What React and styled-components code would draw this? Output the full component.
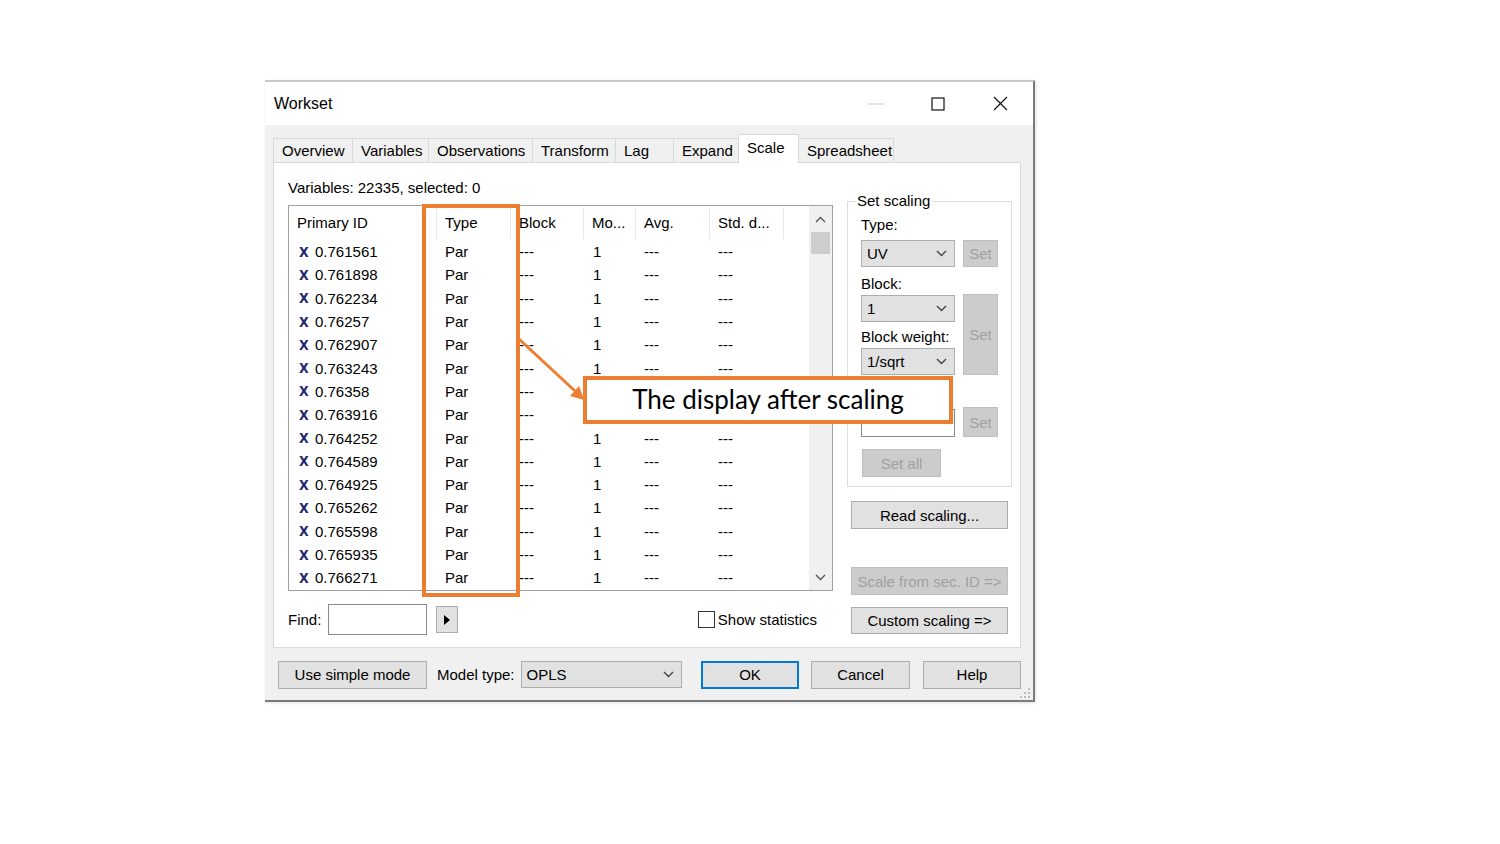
import React from 'react';
import styled, { createGlobalStyle } from 'styled-components';

const GlobalStyle = createGlobalStyle`
  html, body {
    margin: 0;
    padding: 0;
    background: #fff;
  }
  body {
    font-family: "Liberation Sans", Arial, sans-serif;
    color: #000;
  }
`;

const ORANGE = '#ED7D31';

const Page = styled.div`
  position: relative;
  width: 1500px;
  height: 844px;
  box-sizing: border-box;
  padding: 80px 0 0 265px;
  overflow: hidden;
`;

const Window = styled.div`
  position: relative;
  width: 770px;
  box-sizing: border-box;
  background: #f0f0f0;
  border-top: 2px solid #c8c8c8;
  border-right: 2px solid #7b7b7b;
  border-bottom: 2px solid #7b7b7b;
  box-shadow: 1px 1px 3px rgba(0, 0, 0, 0.12);
`;

const TitleBar = styled.div`
  height: 43px;
  background: #fff;
  display: flex;
  align-items: center;
  padding-right: 2px;
`;

const Title = styled.div`
  flex: 1;
  padding-left: 9px;
  font-size: 16px;
`;

const WinButton = styled.div`
  width: 62px;
  height: 43px;
  display: flex;
  align-items: center;
  justify-content: center;
`;

const Body = styled.div`
  padding: 9px 12px 11px 8px;
`;

const TabRow = styled.div`
  display: flex;
  align-items: flex-end;
  height: 28px;
`;

const Tab = styled.div`
  position: relative;
  z-index: ${p => (p.$active ? 2 : 1)};
  box-sizing: border-box;
  width: ${p => p.$w}px;
  height: ${p => (p.$active ? 29 : 24)}px;
  margin-left: -1px;
  margin-bottom: ${p => (p.$active ? -1 : 0)}px;
  padding-left: 8px;
  border: 1px solid #d9d9d9;
  border-bottom: none;
  background: ${p => (p.$active ? '#fff' : '#f0f0f0')};
  font-size: 15px;
  line-height: ${p => (p.$active ? 26 : 23)}px;
  white-space: nowrap;

  &:first-child {
    margin-left: 0;
  }
`;

const Panel = styled.div`
  position: relative;
  z-index: 0;
  height: 486px;
  box-sizing: border-box;
  background: #fff;
  border: 1px solid #d9d9d9;
  padding: 16px 7px 12px 14px;
  display: flex;
  gap: 14px;
`;

const LeftCol = styled.div`
  width: 545px;
  display: flex;
  flex-direction: column;
`;

const InfoLabel = styled.div`
  font-size: 15px;
  line-height: 18px;
  height: 18px;
`;

const ListBox = styled.div`
  margin-top: 8px;
  height: 386px;
  box-sizing: border-box;
  border: 1px solid #a0a0a0;
  display: flex;
  overflow: hidden;
`;

const ListMain = styled.div`
  flex: 1;
  display: flex;
  flex-direction: column;
`;

const HeaderRow = styled.div`
  display: flex;
  height: 34px;
  align-items: flex-start;
`;

const HeadCell = styled.div`
  box-sizing: border-box;
  width: ${p => p.$w}px;
  height: 31px;
  line-height: 30px;
  margin-top: 2px;
  padding-left: ${p => p.$pad}px;
  font-size: 15px;
  white-space: nowrap;
  border-right: 1px solid #e8e8e8;
`;

const Row = styled.div`
  display: flex;
  height: 23.3px;
  align-items: center;
`;

const Cell = styled.div`
  box-sizing: border-box;
  width: ${p => p.$w}px;
  padding-left: ${p => p.$pad}px;
  font-size: 15px;
  white-space: nowrap;
  display: flex;
  align-items: center;
`;

const XMark = styled.span`
  font-family: "DejaVu Sans", sans-serif;
  font-weight: bold;
  font-size: 14px;
  color: #23246f;
  width: 16px;
  margin-left: 2px;
  transform: scaleX(0.9);
  transform-origin: left center;
`;

const ScrollBar = styled.div`
  width: 23px;
  background: #f0f0f0;
  display: flex;
  flex-direction: column;
  align-items: center;
`;

const ScrollArrow = styled.div`
  height: 26px;
  width: 100%;
  display: flex;
  align-items: center;
  justify-content: center;
`;

const Thumb = styled.div`
  width: 19px;
  height: 22px;
  background: #cdcdcd;
`;

const ScrollTrack = styled.div`
  flex: 1;
`;

const FindRow = styled.div`
  margin-top: 13px;
  height: 31px;
  display: flex;
  align-items: center;
`;

const FindLabel = styled.div`
  font-size: 15px;
  width: 40px;
`;

const TextBox = styled.div`
  box-sizing: border-box;
  width: ${p => p.$w}px;
  height: ${p => p.$h}px;
  margin-top: ${p => p.$mt || 0}px;
  background: #fff;
  border: 1px solid #8a8a8a;
`;

const SmallButton = styled.div`
  box-sizing: border-box;
  width: 22px;
  height: 27px;
  margin-left: 9px;
  background: #e1e1e1;
  border: 1px solid #adadad;
  display: flex;
  align-items: center;
  justify-content: center;
`;

const CheckWrap = styled.label`
  margin-left: auto;
  margin-right: 16px;
  display: flex;
  align-items: center;
  font-size: 15px;
  gap: 3px;
`;

const CheckBox = styled.span`
  box-sizing: border-box;
  width: 17px;
  height: 17px;
  border: 1px solid #333;
  background: #fff;
`;

const RightCol = styled.div`
  width: 165px;
  padding-top: 13px;
  display: flex;
  flex-direction: column;
`;

const GroupBox = styled.fieldset`
  margin: 0;
  padding: 0 0 9px 13px;
  border: 1px solid #dcdcdc;
  min-width: 0;
`;

const Legend = styled.legend`
  font-size: 15px;
  line-height: 18px;
  padding: 0 2px;
  margin-left: -6px;
`;

const FieldLabel = styled.div`
  font-size: 15px;
  line-height: 18px;
  height: 18px;
  margin-top: ${p => p.$mt}px;
  white-space: nowrap;
`;

const Select = styled.div`
  box-sizing: border-box;
  width: ${p => p.$w}px;
  height: 27px;
  margin-top: ${p => p.$mt || 0}px;
  padding: 0 7px 0 5px;
  background: #e1e1e1;
  border: 1px solid #adadad;
  display: flex;
  align-items: center;
  justify-content: space-between;
  font-size: 15px;
`;

const FieldRow = styled.div`
  display: flex;
  align-items: flex-end;
  gap: 8px;
  margin-top: ${p => p.$mt || 0}px;
`;

const FieldCol = styled.div`
  width: 94px;
  display: flex;
  flex-direction: column;
`;

const Button = styled.div`
  box-sizing: border-box;
  width: ${p => p.$w}px;
  height: ${p => p.$h || 28}px;
  margin-top: ${p => p.$mt || 0}px;
  margin-left: ${p => p.$ml || 0}px;
  flex-shrink: 0;
  display: flex;
  align-items: center;
  justify-content: center;
  font-size: 15px;
  white-space: nowrap;
  color: ${p => (p.$off ? '#a0a0a0' : '#000')};
  background: ${p => (p.$off ? '#cccccc' : '#e1e1e1')};
  border: ${p =>
    p.$primary ? '2px solid #0078d7' : `1px solid ${p.$off ? '#bfbfbf' : '#adadad'}`};
`;

const BottomBar = styled.div`
  margin-top: 12px;
  height: 29px;
  display: flex;
  align-items: center;
`;

const BarLabel = styled.div`
  font-size: 15px;
  margin-left: 10px;
  margin-right: 6px;
  white-space: nowrap;
`;

const Grip = styled.svg`
  position: absolute;
  right: 3px;
  bottom: 2px;
`;

const TypeFrame = styled.div`
  position: absolute;
  left: 422px;
  top: 204px;
  width: 98px;
  height: 393px;
  box-sizing: border-box;
  border: 4px solid ${ORANGE};
  pointer-events: none;
`;

const Callout = styled.div`
  position: absolute;
  left: 583px;
  top: 376px;
  width: 370px;
  height: 48px;
  box-sizing: border-box;
  border: 4px solid ${ORANGE};
  background: #fff;
  display: flex;
  align-items: center;
  justify-content: center;
  font-family: Lato, "Open Sans", sans-serif;
  font-size: 26px;
  color: #000;
  padding-bottom: 2px;
`;

const ArrowSvg = styled.svg`
  position: absolute;
  left: 510px;
  top: 330px;
  pointer-events: none;
`;

const Chevron = ({ dir = 'down', color = '#444' }) => (
  <svg width="11" height="7" viewBox="0 0 11 7">
    <path
      d={dir === 'down' ? 'M1 1 L5.5 5.5 L10 1' : 'M1 6 L5.5 1.5 L10 6'}
      fill="none"
      stroke={color}
      strokeWidth="1.4"
    />
  </svg>
);

const tabs = [
  ['Overview', 80],
  ['Variables', 77],
  ['Observations', 105],
  ['Transform', 84],
  ['Lag', 59],
  ['Expand', 66],
  ['Scale', 61],
  ['Spreadsheet', 96],
];

const columns = [
  { title: 'Primary ID', w: 148, pad: 8 },
  { title: 'Type', w: 74, pad: 8 },
  { title: 'Block', w: 73, pad: 8 },
  { title: 'Mo...', w: 52, pad: 8 },
  { title: 'Avg.', w: 74, pad: 8 },
  { title: 'Std. d...', w: 74, pad: 8 },
];

const ids = [
  '0.761561', '0.761898', '0.762234', '0.76257', '0.762907',
  '0.763243', '0.76358', '0.763916', '0.764252', '0.764589',
  '0.764925', '0.765262', '0.765598', '0.765935', '0.766271',
];

// rows 7 and 8 sit behind the callout, only their left part shows
const hiddenRows = ['0.76358', '0.763916'];

const App = () => {
  return (
    <Page>
      <GlobalStyle />
      <Window>
        <TitleBar>
          <Title>Workset</Title>
          <WinButton>
            <svg width="16" height="2"><rect width="16" height="1" y="0.5" fill="#c8c8c8" /></svg>
          </WinButton>
          <WinButton>
            <svg width="14" height="14"><rect x="1" y="1" width="12" height="12" fill="none" stroke="#111" strokeWidth="1.2" /></svg>
          </WinButton>
          <WinButton>
            <svg width="15" height="15"><path d="M1 1 L14 14 M14 1 L1 14" stroke="#111" strokeWidth="1.2" /></svg>
          </WinButton>
        </TitleBar>

        <Body>
          <TabRow>
            {tabs.map(([name, w]) => (
              <Tab key={name} $w={w} $active={name === 'Scale'}>{name}</Tab>
            ))}
          </TabRow>

          <Panel>
            <LeftCol>
              <InfoLabel>Variables: 22335, selected: 0</InfoLabel>
              <ListBox>
                <ListMain>
                  <HeaderRow>
                    {columns.map(c => (
                      <HeadCell key={c.title} $w={c.w} $pad={c.pad}>{c.title}</HeadCell>
                    ))}
                  </HeaderRow>
                  {ids.map(id => {
                    const covered = hiddenRows.includes(id);
                    return (
                      <Row key={id}>
                        <Cell $w={148} $pad={8}><XMark>X</XMark>{id}</Cell>
                        <Cell $w={74} $pad={8}>Par</Cell>
                        <Cell $w={73} $pad={8}>---</Cell>
                        <Cell $w={52} $pad={9}>{covered ? '' : '1'}</Cell>
                        <Cell $w={74} $pad={8}>{covered ? '' : '---'}</Cell>
                        <Cell $w={74} $pad={8}>{covered ? '' : '---'}</Cell>
                      </Row>
                    );
                  })}
                </ListMain>
                <ScrollBar>
                  <ScrollArrow><Chevron dir="up" color="#555" /></ScrollArrow>
                  <Thumb />
                  <ScrollTrack />
                  <ScrollArrow><Chevron dir="down" color="#555" /></ScrollArrow>
                </ScrollBar>
              </ListBox>

              <FindRow>
                <FindLabel>Find:</FindLabel>
                <TextBox $w={99} $h={31} />
                <SmallButton>
                  <svg width="6" height="10"><path d="M0 0 L6 5 L0 10 Z" fill="#000" /></svg>
                </SmallButton>
                <CheckWrap>
                  <CheckBox />
                  Show statistics
                </CheckWrap>
              </FindRow>
            </LeftCol>

            <RightCol>
              <GroupBox>
                <Legend>Set scaling</Legend>
                <FieldLabel $mt={6}>Type:</FieldLabel>
                <FieldRow $mt={6}>
                  <Select $w={94}>UV<Chevron /></Select>
                  <Button $w={35} $h={27} $off>Set</Button>
                </FieldRow>
                <FieldRow>
                  <FieldCol>
                    <FieldLabel $mt={8}>Block:</FieldLabel>
                    <Select $w={94} $mt={2}>1<Chevron /></Select>
                    <FieldLabel $mt={6}>Block weight:</FieldLabel>
                    <Select $w={94} $mt={2}>1/sqrt<Chevron /></Select>
                  </FieldCol>
                  <Button $w={35} $h={81} $off>Set</Button>
                </FieldRow>
                <FieldRow>
                  <FieldCol>
                    <TextBox $w={94} $h={28} $mt={34} />
                  </FieldCol>
                  <Button $w={35} $h={30} $off>Set</Button>
                </FieldRow>
                <Button $w={79} $mt={12} $ml={1} $off>Set all</Button>
              </GroupBox>
              <Button $w={157} $mt={14} $ml={4}>Read scaling...</Button>
              <Button $w={157} $mt={38} $ml={4} $off>Scale from sec. ID =&gt;</Button>
              <Button $w={157} $h={27} $mt={12} $ml={4}>Custom scaling =&gt;</Button>
            </RightCol>
          </Panel>

          <BottomBar>
            <Button $w={149} $ml={5}>Use simple mode</Button>
            <BarLabel>Model type:</BarLabel>
            <Select $w={162}>OPLS<Chevron /></Select>
            <Button $w={98} $h={28} $ml={19} $primary>OK</Button>
            <Button $w={99} $ml={12}>Cancel</Button>
            <Button $w={98} $ml={13}>Help</Button>
          </BottomBar>
        </Body>

        <Grip width="11" height="11" viewBox="0 0 11 11">
          {[[9, 1], [9, 5], [5, 5], [9, 9], [5, 9], [1, 9]].map(([x, y]) => (
            <rect key={`${x}-${y}`} x={x} y={y} width="2" height="2" fill="#bcbcbc" />
          ))}
        </Grip>
      </Window>

      <TypeFrame />
      <ArrowSvg width="90" height="80" viewBox="0 0 90 80">
        <line x1="9" y1="9" x2="65" y2="61" stroke={ORANGE} strokeWidth="3" />
        <polygon points="74,70 60,66 69,56" fill={ORANGE} />
      </ArrowSvg>
      <Callout>The display after scaling</Callout>
    </Page>
  );
};

export default App;
